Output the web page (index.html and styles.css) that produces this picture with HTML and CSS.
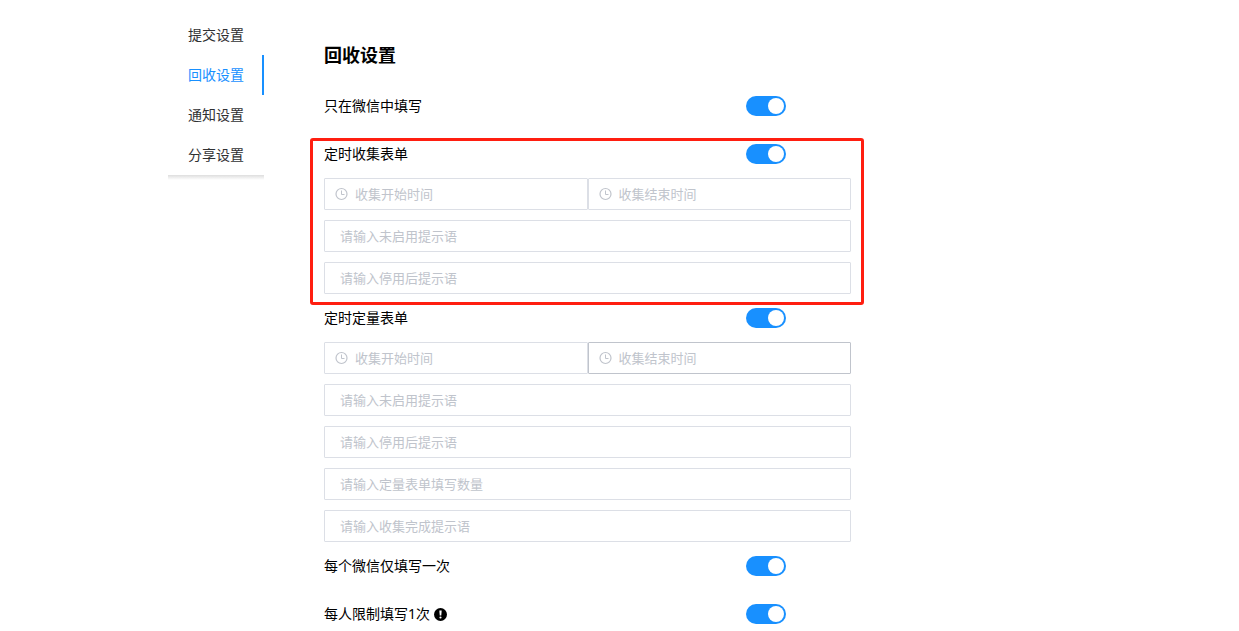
FILE: index.html
```html
<!DOCTYPE html>
<html lang="zh-CN">
<head>
    <meta charset="UTF-8">
    <meta name="viewport" content="width=device-width, initial-scale=1.0">
    <title>回收设置</title>
    <link rel="stylesheet" href="styles.css">
</head>
<body>
    <!-- 图标 -->
    <svg class="icon-defs" aria-hidden="true">
        <symbol id="icon-clock" viewBox="0 0 14 14">
            <circle cx="7.5" cy="7" r="5.5" fill="none" stroke="currentColor" stroke-width="1.2"/>
            <path d="M7.5 3.5V7.5H10.5" fill="none" stroke="currentColor"/>
        </symbol>
    </svg>

    <div class="container">
        <!-- 左侧菜单 -->
        <nav class="menu">
            <a href="#submit">提交设置</a>
            <a href="#recycle" class="active">回收设置</a>
            <a href="#notice">通知设置</a>
            <a href="#share">分享设置</a>
        </nav>

        <main class="content" id="recycle">
            <h1>回收设置</h1>

            <div class="row">
                <label for="wechatOnly">只在微信中填写</label>
                <input type="checkbox" class="switch" id="wechatOnly" checked>
            </div>

            <!-- 定时收集 -->
            <section class="highlight">
                <div class="row">
                    <label for="timed">定时收集表单</label>
                    <input type="checkbox" class="switch" id="timed" checked>
                </div>
                <div class="fields">
                    <div class="dates">
                        <div class="date">
                            <svg><use href="#icon-clock"/></svg>
                            <input type="text" placeholder="收集开始时间" aria-label="收集开始时间">
                        </div>
                        <div class="date">
                            <svg><use href="#icon-clock"/></svg>
                            <input type="text" placeholder="收集结束时间" aria-label="收集结束时间">
                        </div>
                    </div>
                    <input type="text" class="text" placeholder="请输入未启用提示语" aria-label="未启用提示语">
                    <input type="text" class="text" placeholder="请输入停用后提示语" aria-label="停用后提示语">
                </div>
            </section>

            <!-- 定时定量 -->
            <section>
                <div class="row">
                    <label for="quota">定时定量表单</label>
                    <input type="checkbox" class="switch" id="quota" checked>
                </div>
                <div class="fields">
                    <div class="dates">
                        <div class="date">
                            <svg><use href="#icon-clock"/></svg>
                            <input type="text" placeholder="收集开始时间" aria-label="收集开始时间">
                        </div>
                        <div class="date hover">
                            <svg><use href="#icon-clock"/></svg>
                            <input type="text" placeholder="收集结束时间" aria-label="收集结束时间">
                        </div>
                    </div>
                    <input type="text" class="text" placeholder="请输入未启用提示语" aria-label="未启用提示语">
                    <input type="text" class="text" placeholder="请输入停用后提示语" aria-label="停用后提示语">
                    <input type="text" class="text" placeholder="请输入定量表单填写数量" aria-label="定量表单填写数量">
                    <input type="text" class="text" placeholder="请输入收集完成提示语" aria-label="收集完成提示语">
                </div>
            </section>

            <div class="row">
                <label for="wechatOnce">每个微信仅填写一次</label>
                <input type="checkbox" class="switch" id="wechatOnce" checked>
            </div>
            <div class="row">
                <label for="personOnce">每人限制填写1次
                    <svg class="tip" viewBox="0 0 12 12" aria-hidden="true">
                        <circle cx="6" cy="6" r="6"/>
                        <path d="M4.9 2.2h2.2L6.7 7H5.3z" fill="#fff"/>
                        <circle cx="6" cy="8.8" r="1" fill="#fff"/>
                    </svg>
                </label>
                <input type="checkbox" class="switch" id="personOnce" checked>
            </div>
        </main>
    </div>
</body>
</html>
```

FILE: styles.css
```css
* {
    box-sizing: border-box;
}
body {
    margin: 0;
    background-color: #fff;
    color: #000;
    font-family: "Noto Sans", "Noto Sans CJK SC", sans-serif;
    font-size: 14px;
    line-height: 20px;
}
.icon-defs {
    display: none;
}
.container {
    display: flex;
    align-items: flex-start;
    gap: 60px;
    padding: 15px 20px 0 168px;
}

/* 左侧菜单 */
.menu {
    flex: 0 0 96px;
}
.menu a {
    display: block;
    padding-left: 20px;
    line-height: 40px;
    color: #303133;
    text-decoration: none;
    border-right: 2px solid transparent;
}
.menu a.active {
    color: #1890ff;
    border-right-color: #1890ff;
}
/* 底部阴影 */
.menu::after {
    content: "";
    display: block;
    height: 5px;
    background: linear-gradient(#dedede, #fff);
}

/* 右侧内容 */
.content {
    flex: 1;
    max-width: 527px;
    padding-top: 13px;
}
h1 {
    margin: 0;
    font-size: 18px;
    line-height: 54px;
}
.row {
    display: grid;
    grid-template-columns: 80% 20%;
    align-items: center;
    height: 48px;
}
.fields {
    display: flex;
    flex-direction: column;
    gap: 10px;
}
.dates {
    display: flex;
}
.date,
.text {
    height: 32px;
    border: 1px solid #dcdfe6;
    border-radius: 1px;
}
.date {
    flex: 1;
    display: flex;
    align-items: center;
    gap: 7px;
    min-width: 0;
    padding: 0 9px;
    color: #c0c4cc;
}
.date svg {
    flex: none;
    width: 14px;
    height: 14px;
}
.date input {
    flex: 1;
    min-width: 0;
    height: 30px;
    padding: 0;
    border: none;
    outline: none;
}
.date:hover,
.date.hover {
    border-color: #c0c4cc;
}
.text {
    width: 100%;
    padding: 0 15px;
}
.date input,
.text {
    font-family: inherit;
    font-size: 13px;
    line-height: 30px;
    color: #606266;
}
::placeholder {
    color: #c0c4cc;
}

/* 开关 */
.switch {
    appearance: none;
    display: flex;
    align-items: center;
    width: 40px;
    height: 20px;
    margin: 0;
    padding: 2px;
    border-radius: 10px;
    background-color: #dcdfe6;
    cursor: pointer;
}
.switch::before {
    content: "";
    width: 16px;
    height: 16px;
    border-radius: 50%;
    background-color: #fff;
}
.switch:checked {
    justify-content: flex-end;
    background-color: #1890ff;
}
.tip {
    width: 13px;
    height: 13px;
    vertical-align: -2px;
}

/* 红色标注框 */
.highlight {
    position: relative;
}
.highlight::after {
    content: "";
    position: absolute;
    inset: 8px -13px -11px -14px;
    border: 3px solid #ff1e10;
    border-radius: 3px;
    pointer-events: none;
}
```
